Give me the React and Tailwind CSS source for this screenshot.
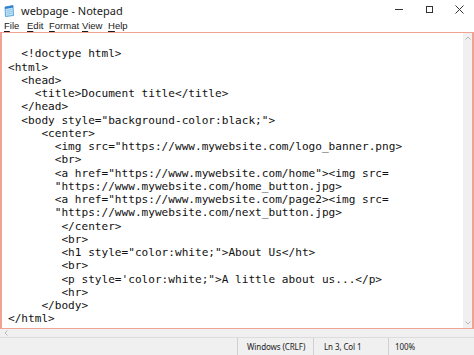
import React from "react";

const lines = [
  "",
  "  <!doctype html>",
  "<html>",
  "  <head>",
  "    <title>Document title</title>",
  "  </head>",
  '  <body style="background-color:black;">',
  "     <center>",
  '       <img src="https://www.mywebsite.com/logo_banner.png>',
  "       <br>",
  '       <a href="https://www.mywebsite.com/home"><img src=',
  '       "https://www.mywebsite.com/home_button.jpg>',
  '       <a href="https://www.mywebsite.com/page2><img src=',
  '       "https://www.mywebsite.com/next_button.jpg>',
  "        </center>",
  "        <br>",
  '        <h1 style="color:white;">About Us</ht>',
  "        <br>",
  "        <p style='color:white;\">A little about us...</p>",
  "        <hr>",
  "     </body>",
  "</html>",
];

function NotepadIcon() {
  return (
    <svg width="12" height="13" viewBox="0 0 12 13">
      <path d="M2 3 L10 1.5 L10.5 11.5 L2.5 12.5 Z" fill="#bfe3f7" stroke="#3b8fd1" strokeWidth="0.8" />
      <path d="M2 3 L10 1.5 L10.1 3.4 L2.1 4.9 Z" fill="#2d7fc8" />
      <path d="M3.5 6.5 L9 5.6 M3.6 8.3 L9.1 7.4 M3.7 10.1 L9.2 9.2" stroke="#7ab7e2" strokeWidth="0.6" />
    </svg>
  );
}

function Menu({ k, rest, w }) {
  return (
    <span className={`${w} shrink-0`}>
      <span className="underline underline-offset-2">{k}</span>
      {rest}
    </span>
  );
}

export default function App() {
  return (
    <div
      className="w-[474px] h-[355px] bg-white flex flex-col overflow-hidden text-[#1a1a1a]"
      style={{ fontFamily: '"Noto Sans", "Open Sans", sans-serif' }}
    >
      {/* title bar */}
      <div className="h-[19px] flex items-center shrink-0">
        <div className="ml-[3px] mt-[1px] flex items-center">
          <NotepadIcon />
        </div>
        <div className="ml-[6px] mt-[1px] text-[11px] leading-none text-[#1a1a1a]">webpage - Notepad</div>
        <div className="ml-auto flex items-center h-full">
          <div className="w-[30px] h-full flex items-center justify-center">
            <div className="w-[8px] h-px bg-[#333]" />
          </div>
          <div className="w-[30px] h-full flex items-center justify-center">
            <div className="w-[7px] h-[7px] border border-[#333]" />
          </div>
          <div className="w-[30px] h-full flex items-center justify-center">
            <svg width="9" height="9" viewBox="0 0 9 9">
              <path d="M0.5 0.5 L8.5 8.5 M8.5 0.5 L0.5 8.5" stroke="#333" strokeWidth="1" />
            </svg>
          </div>
        </div>
      </div>
      {/* menu bar */}
      <div
        className="h-[13px] flex items-center pl-[4px] text-[9.5px] leading-none shrink-0"
        style={{ fontFamily: '"Liberation Sans", Arial, sans-serif' }}
      >
        <Menu k="F" rest="ile" w="w-[23px]" />
        <Menu k="E" rest="dit" w="w-[22px]" />
        <Menu k="F" rest="ormat" w="w-[33px]" />
        <Menu k="V" rest="iew" w="w-[26px]" />
        <Menu k="H" rest="elp" w="w-[24px]" />
      </div>
      {/* editor */}
      <div className="h-[297px] shrink-0 flex border-t-[1.5px] border-b-[1.5px] border-l-[2px] border-r-[2px] border-[#f0a393]">
        <div
          className="flex-1 pl-[6px] pt-[1px] text-[11.1px] leading-[13.25px] text-[#111] whitespace-pre overflow-hidden"
          style={{ fontFamily: '"DejaVu Sans Mono", "Liberation Mono", monospace' }}
        >
          {lines.map((l, i) => (
            <div key={i} className="h-[13.25px]">{l}</div>
          ))}
        </div>
        <div className="w-[9px] bg-[#f0f0f0] flex flex-col items-center justify-between py-[3px]">
          <svg width="6" height="4" viewBox="0 0 6 4">
            <path d="M0.5 3.5 L3 1 L5.5 3.5" stroke="#b0b0b0" fill="none" strokeWidth="0.9" />
          </svg>
          <svg width="6" height="4" viewBox="0 0 6 4">
            <path d="M0.5 0.5 L3 3 L5.5 0.5" stroke="#b0b0b0" fill="none" strokeWidth="0.9" />
          </svg>
        </div>
      </div>
      {/* horizontal scrollbar */}
      <div className="h-[9px] bg-[#f0f0f0] flex items-center pl-[4px] shrink-0 border-b border-[#dcdcdc]">
        <svg width="4" height="6" viewBox="0 0 4 6">
          <path d="M3.5 0.5 L1 3 L3.5 5.5" stroke="#b0b0b0" fill="none" strokeWidth="0.9" />
        </svg>
      </div>
      {/* status bar */}
      <div className="h-[17px] shrink-0 bg-[#f0f0f0] flex items-center text-[8px] tracking-[-0.1px] leading-none text-[#222] whitespace-nowrap">
        <div className="ml-[237px] h-full border-l border-[#d0d0d0] w-[76px] flex items-center pl-[9px]">
          Windows (CRLF)
        </div>
        <div className="h-full border-l border-[#d0d0d0] w-[75px] flex items-center pl-[10px]">
          Ln 3, Col 1
        </div>
        <div className="h-full border-l border-[#d0d0d0] flex-1 flex items-center pl-[6px]">100%</div>
      </div>
    </div>
  );
}
